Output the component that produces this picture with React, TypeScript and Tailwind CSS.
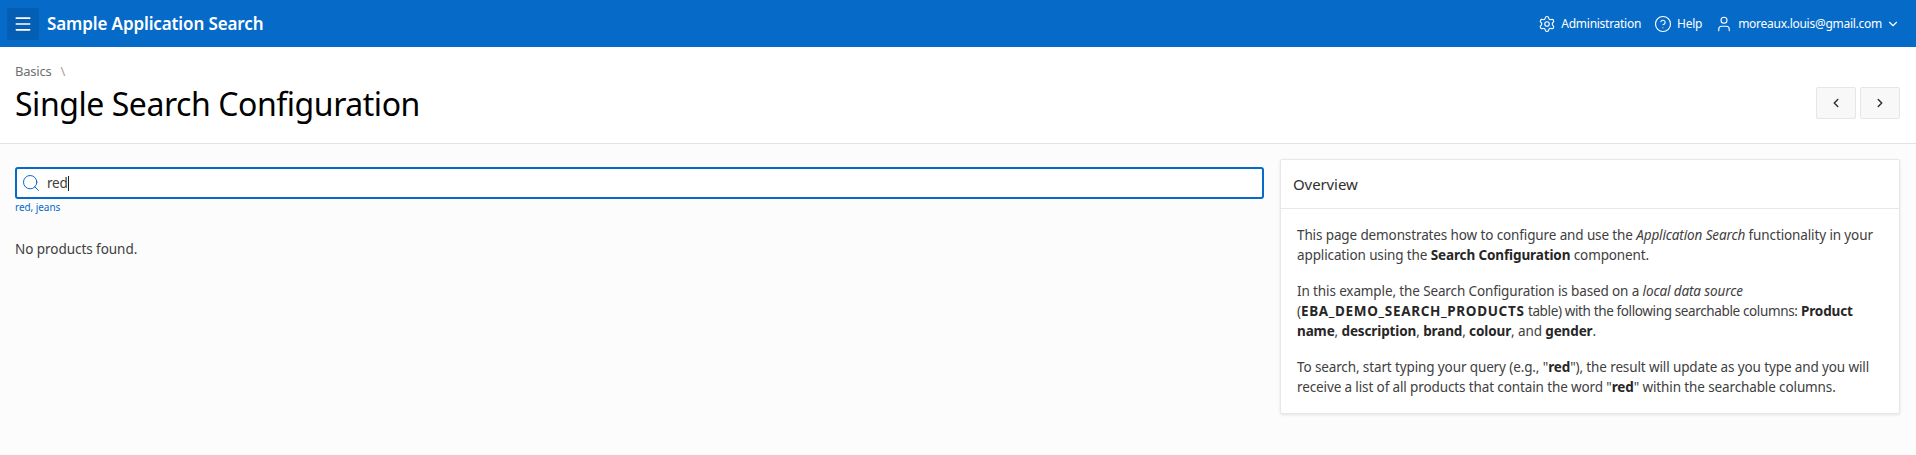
import React from "react";
import { Menu, Settings, CircleHelp, User, ChevronDown, ChevronLeft, ChevronRight, Search } from "lucide-react";

const font = "font-['Noto_Sans','Open_Sans',sans-serif]";

export default function App() {
  return (
    <div className={`h-[455px] w-[1916px] overflow-hidden bg-[#fcfcfc] text-[#262626] ${font}`}>
      <header className="flex h-[47px] items-center justify-between bg-[#056ac8] pl-[7px] pr-[16px] text-white">
        <div className="flex items-center">
          <button className="flex h-[32px] w-[32px] items-center justify-center rounded-[2px] bg-[#045fb4]">
            <Menu size={20} strokeWidth={2} />
          </button>
          <span className="ml-[8px] text-[17px] font-semibold tracking-[-0.12px]">Sample Application Search</span>
        </div>
        <div className="flex items-center text-[12px] tracking-[-0.27px]">
          <Settings size={18} strokeWidth={1.5} />
          <span className="ml-[5px]">Administration</span>
          <CircleHelp size={18} strokeWidth={1.5} className="ml-[13px]" />
          <span className="ml-[5px]">Help</span>
          <User size={18} strokeWidth={1.5} className="ml-[13px]" />
          <span className="ml-[5px]">moreaux.louis@gmail.com</span>
          <ChevronDown size={14} strokeWidth={2} className="ml-[4px]" />
        </div>
      </header>

      <section className="flex h-[97px] justify-between border-b border-[#e2e2e2] bg-white pl-[15px] pr-[16px]">
        <div>
          <div className="mt-[16px] flex text-[13px] leading-[16px] tracking-[-0.2px] text-[#707070]">
            <span>Basics</span>
            <span className="ml-[9px] text-[#a0a0a0]">\</span>
          </div>
          <h1 className="mt-[5px] text-[32px] leading-[40px] tracking-[-0.45px] text-black">Single Search Configuration</h1>
        </div>
        <div className="mt-[40px] flex gap-[4px]">
          <button className="flex h-[32px] w-[40px] items-center justify-center rounded-[2px] border border-[#e6e6e6] bg-[#f8f8f8]">
            <ChevronLeft size={14} strokeWidth={2.5} className="text-[#303030]" />
          </button>
          <button className="flex h-[32px] w-[40px] items-center justify-center rounded-[2px] border border-[#e6e6e6] bg-[#f8f8f8]">
            <ChevronRight size={14} strokeWidth={2.5} className="text-[#303030]" />
          </button>
        </div>
      </section>

      <main className="flex pl-[15px] pr-[16px]">
        <div className="w-[1249px] pt-[23px]">
          <div className="flex h-[32px] items-center rounded-[3px] border-2 border-[#056ac8] bg-white pl-[4px]">
            <Search size={20} strokeWidth={1.2} className="text-[#056ac8]" />
            <span className="ml-[6px] text-[13.5px] tracking-[-0.2px] text-[#404040]">red</span>
            <span className="h-[15px] w-px bg-[#202020]" />
          </div>
          <div className="mt-[1px] text-[10px] leading-[14px] tracking-[-0.05px] text-[#056ac8]">red, jeans</div>
          <p className="mt-[25px] text-[13.5px] leading-[20px] tracking-[-0.05px] text-[#404040]">No products found.</p>
        </div>

        <aside className="ml-[16px] mt-[15px] h-[255px] flex-1 rounded-[2px] border border-[#e8e8e8] bg-white shadow-[0_1px_3px_rgba(0,0,0,0.1)]">
          <div className="flex h-[49px] items-center border-b border-[#e8e8e8] pl-[12px] text-[15px] tracking-[-0.1px] text-[#303030]">Overview</div>
          <div className="pl-[16px] pr-[20px] pt-[16px] text-[13.5px] leading-[20px] tracking-[-0.12px] text-[#404040]">
            <p>
              This page demonstrates how to configure and use the <em>Application Search</em> functionality in your application using the <b className="text-[#262626]">Search Configuration</b> component.
            </p>
            <p className="mt-[16px]">
              In this example, the Search Configuration is based on a <em>local data source</em> (<b className="text-[#262626] tracking-[0.67px]">EBA_DEMO_SEARCH_PRODUCTS</b> <span className="tracking-[-0.37px]">table) with the following searchable columns:</span> <b className="text-[#262626]">Product name</b>, <b className="text-[#262626]">description</b>, <b className="text-[#262626]">brand</b>, <b className="text-[#262626]">colour</b>, and <b className="text-[#262626]">gender</b>.
            </p>
            <p className="mt-[16px]">
              To search, start typing your query (e.g., "<b className="text-[#262626]">red</b>"), the result will update as you type and you will receive a list of all products that contain the word "<b className="text-[#262626]">red</b>" within the searchable columns.
            </p>
          </div>
        </aside>
      </main>
    </div>
  );
}
